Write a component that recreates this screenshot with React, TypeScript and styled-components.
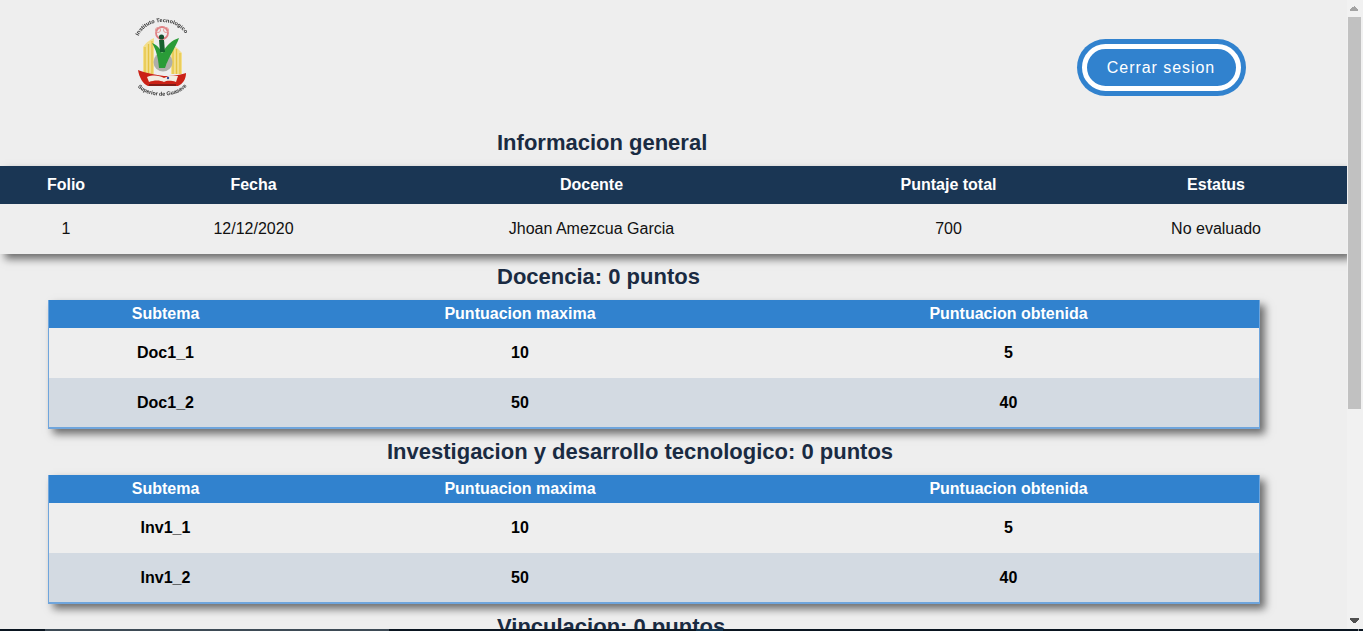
import React from 'react';
import styled, { createGlobalStyle } from 'styled-components';

const GlobalStyle = createGlobalStyle`
  html, body {
    margin: 0;
    height: 100%;
    overflow: hidden;
    background: #eeeeee;
    font-family: "Liberation Sans", Arial, sans-serif;
  }
`;

const Screen = styled.div`
  height: 100vh;
  display: flex;
  flex-direction: column;
`;

const Window = styled.div`
  flex: 1;
  min-height: 0;
  display: flex;
`;

const Page = styled.main`
  flex: 1;
  min-width: 0;
  overflow: hidden;
  background: #eeeeee;
`;

const Header = styled.header`
  height: 120px;
  box-sizing: border-box;
  padding: 16px 106px 0 132px;
  display: flex;
  justify-content: space-between;
  align-items: flex-start;
`;

const Logo = styled.svg`
  width: 60px;
  height: 84px;
  display: block;
`;

const LogoutButton = styled.button`
  width: 159px;
  height: 47px;
  margin-top: 28px;
  box-sizing: border-box;
  border: 5px solid #ffffff;
  border-radius: 24px;
  box-shadow: 0 0 0 5px #3182ce;
  background: #3182ce;
  color: #ffffff;
  font-family: inherit;
  font-size: 16px;
  letter-spacing: 0.95px;
  padding: 0 1px 0 0;
`;

const SectionTitle = styled.h2<{ $indent?: number }>`
  margin: 0;
  height: 46px;
  box-sizing: border-box;
  padding-left: ${({ $indent }) => $indent ?? 497}px;
  font-size: 22px;
  line-height: 46px;
  font-weight: 700;
  color: #1a2b42;
  white-space: nowrap;
`;

const GeneralTable = styled.section`
  box-shadow: 5px 5px 8px rgba(0, 0, 0, 0.55);
`;

const GeneralRow = styled.div<{ $head?: boolean }>`
  height: ${({ $head }) => ($head ? 38 : 50)}px;
  padding-right: 4px;
  display: grid;
  grid-template-columns: 132px 243px 433px 281px 254px;
  align-items: center;
  text-align: center;
  font-size: 16px;
  font-weight: ${({ $head }) => ($head ? 700 : 400)};
  color: ${({ $head }) => ($head ? '#ffffff' : '#111111')};
  background: ${({ $head }) => ($head ? '#1a3654' : '#eeeeee')};
`;

const TopicTable = styled.section`
  margin: 0 87px 0 48px;
  border-left: 1px solid #6fa5dc;
  border-right: 1px solid #6fa5dc;
  border-bottom: 2px solid #6fa5dc;
  box-shadow: 5px 5px 8px rgba(0, 0, 0, 0.55);
`;

const TopicRow = styled.div<{ $variant: 'head' | 'plain' | 'alt' }>`
  height: ${({ $variant }) => ($variant === 'head' ? 28 : $variant === 'alt' ? 49 : 50)}px;
  display: grid;
  grid-template-columns: 233px 476px 501px;
  align-items: center;
  text-align: center;
  font-size: 16px;
  font-weight: 700;
  color: ${({ $variant }) => ($variant === 'head' ? '#ffffff' : '#000000')};
  background: ${({ $variant }) =>
    $variant === 'head' ? '#3182ce' : $variant === 'alt' ? '#d3dae2' : '#eeeeee'};
`;

const Scrollbar = styled.div`
  width: 16px;
  box-sizing: border-box;
  padding-right: 1px;
  flex: none;
  display: flex;
  flex-direction: column;
  align-items: center;
  background: #f1f1f1;
`;

const ArrowSlot = styled.div`
  height: 17px;
  flex: none;
  display: flex;
  align-items: center;
  justify-content: center;
`;

const Thumb = styled.div`
  width: 13px;
  height: 392px;
  margin-left: 1px;
  align-self: flex-start;
  flex: none;
  background: #c1c1c1;
`;

const Spacer = styled.div`
  flex: 1;
`;

const Taskbar = styled.footer`
  height: 2px;
  flex: none;
  display: flex;
  background: #0a1520;
`;

const TaskbarItem = styled.div<{ $width: number; $color: string }>`
  width: ${({ $width }) => $width}px;
  flex: none;
  background: ${({ $color }) => $color};
`;

const SchoolLogo = () => (
  <Logo viewBox="132 16 60 84" aria-label="Instituto Tecnologico Superior de Guasave">
    <defs>
      <filter id="soft" x="-10%" y="-10%" width="120%" height="120%">
        <feGaussianBlur stdDeviation="0.55" />
      </filter>
      <path id="arcTop" d="M138 37 C146 17 178 17 187 37" />
      <path id="arcBottom" d="M137 86 C147 99 176 99 187 86" />
    </defs>
    <g filter="url(#soft)">
      <path d="M143 74V47Q147 41 154 38V74Z" fill="#f3df8d" />
      <path d="M171 44Q177 47 182 53V74H171Z" fill="#f3df8d" />
      <g fill="none" stroke="#e5c342" strokeWidth="1.3">
        <path d="M145 74V47" />
        <path d="M148.5 74V44" />
        <path d="M152 74V41" />
        <path d="M173 74V47" />
        <path d="M176.5 74V49" />
        <path d="M180 74V53" />
      </g>
      <circle cx="163" cy="62" r="9.5" fill="#aeaeaa" />
      <circle cx="163" cy="62" r="4" fill="#d5d5d1" />
      <circle cx="162" cy="33" r="6" fill="none" stroke="#e07f82" strokeWidth="1.8" />
      <circle cx="158" cy="30" r="2.5" fill="none" stroke="#e59a9a" strokeWidth="1" />
      <circle cx="166" cy="30" r="2.5" fill="none" stroke="#e59a9a" strokeWidth="1" />
      <circle cx="161.5" cy="37" r="2.6" fill="#14502e" />
      <path d="M159 68C158 56 156 50 152 43C157 45 160 48 162 53C167 45 172 40 179 38C176 47 169 56 165 68Z" fill="#2c9c38" />
      <path d="M159 40h5l1 12h-5z" fill="#17622f" />
      <path d="M138 70C143 72 150 74 164 76C176 76 182 74 186 73C186 79 183 84 178 86H148C143 84 139 77 138 70Z" fill="#cb2218" />
      <path d="M147 77C154 74 160 76 164 78C169 75 174 75 178 76L176 82C170 80 166 81 164 82C160 80 154 80 149 82Z" fill="#f3ede2" />
      <path d="M149 85H176" stroke="#6e1a14" strokeWidth="1.6" />
      <circle cx="168" cy="78" r="1.2" fill="#3a4a9a" />
      <text fontFamily="'Liberation Sans', sans-serif" fontSize="5.5" fontWeight="700" fill="#2e2e2e">
        <textPath href="#arcTop" startOffset="1" textLength="56" lengthAdjust="spacingAndGlyphs">Instituto Tecnologico</textPath>
      </text>
      <text fontFamily="'Liberation Sans', sans-serif" fontSize="5.5" fontWeight="700" fill="#2e2e2e">
        <textPath href="#arcBottom" startOffset="1" textLength="54" lengthAdjust="spacingAndGlyphs">Superior de Guasave</textPath>
      </text>
    </g>
  </Logo>
);

const Arrow = ({ up, color }: { up?: boolean; color: string }) => (
  <svg width="9" height="5" viewBox="0 0 9 5" shapeRendering="crispEdges">
    <path d={up ? 'M4 0h1v1h1v1h1v1h1v2H0V3h1V2h1V1h2z' : 'M0 0h9v2H8v1H7v1H6v1H3V4H2V3H1V2H0z'} fill={color} />
  </svg>
);

const sections = [
  { title: 'Docencia: 0 puntos', prefix: 'Doc1' },
  { title: 'Investigacion y desarrollo tecnologico: 0 puntos', prefix: 'Inv1', indent: 387 },
];

const App: React.FC = () => {
  return (
    <Screen>
      <GlobalStyle />
      <Window>
        <Page>
          <Header>
            <SchoolLogo />
            <LogoutButton>Cerrar sesion</LogoutButton>
          </Header>
          <SectionTitle>Informacion general</SectionTitle>
          <GeneralTable>
            <GeneralRow $head>
              <div>Folio</div>
              <div>Fecha</div>
              <div>Docente</div>
              <div>Puntaje total</div>
              <div>Estatus</div>
            </GeneralRow>
            <GeneralRow>
              <div>1</div>
              <div>12/12/2020</div>
              <div>Jhoan Amezcua Garcia</div>
              <div>700</div>
              <div>No evaluado</div>
            </GeneralRow>
          </GeneralTable>
          {sections.map((section) => (
            <React.Fragment key={section.prefix}>
              <SectionTitle $indent={section.indent}>{section.title}</SectionTitle>
              <TopicTable>
                <TopicRow $variant="head">
                  <div>Subtema</div>
                  <div>Puntuacion maxima</div>
                  <div>Puntuacion obtenida</div>
                </TopicRow>
                <TopicRow $variant="plain">
                  <div>{section.prefix}_1</div>
                  <div>10</div>
                  <div>5</div>
                </TopicRow>
                <TopicRow $variant="alt">
                  <div>{section.prefix}_2</div>
                  <div>50</div>
                  <div>40</div>
                </TopicRow>
              </TopicTable>
            </React.Fragment>
          ))}
          <SectionTitle>Vinculacion: 0 puntos</SectionTitle>
        </Page>
        <Scrollbar>
          <ArrowSlot>
            <Arrow up color="#a3a3a3" />
          </ArrowSlot>
          <Thumb />
          <Spacer />
          <ArrowSlot>
            <Arrow color="#505050" />
          </ArrowSlot>
        </Scrollbar>
      </Window>
      <Taskbar>
        <TaskbarItem $width={45} $color="#0a1520" />
        <TaskbarItem $width={344} $color="#3d4a55" />
        <TaskbarItem $width={307} $color="#0a1520" />
        <TaskbarItem $width={27} $color="#12344f" />
        <TaskbarItem $width={635} $color="#0a1520" />
        <TaskbarItem $width={1} $color="#8a8f94" />
      </Taskbar>
    </Screen>
  );
};

export default App;
